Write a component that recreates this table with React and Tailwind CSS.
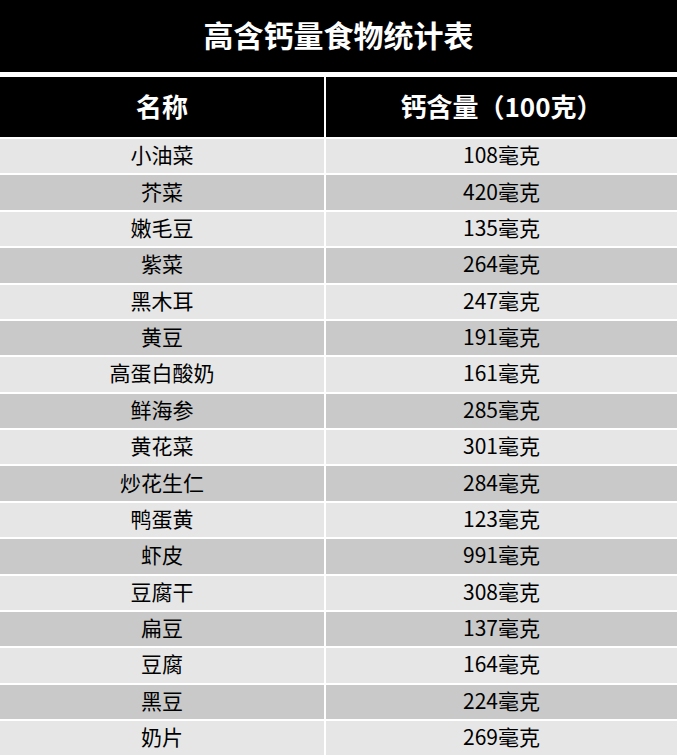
import React from "react";

const rows = [
  ["小油菜", "108毫克"],
  ["芥菜", "420毫克"],
  ["嫩毛豆", "135毫克"],
  ["紫菜", "264毫克"],
  ["黑木耳", "247毫克"],
  ["黄豆", "191毫克"],
  ["高蛋白酸奶", "161毫克"],
  ["鲜海参", "285毫克"],
  ["黄花菜", "301毫克"],
  ["炒花生仁", "284毫克"],
  ["鸭蛋黄", "123毫克"],
  ["虾皮", "991毫克"],
  ["豆腐干", "308毫克"],
  ["扁豆", "137毫克"],
  ["豆腐", "164毫克"],
  ["黑豆", "224毫克"],
  ["奶片", "269毫克"],
];

export default function App() {
  return (
    <div
      className="w-[677px] h-[755px] overflow-hidden bg-white"
      style={{ fontFamily: '"Microsoft YaHei", "Noto Sans CJK SC", "Noto Sans", sans-serif' }}
    >
      <div className="h-[72px] pb-[4px] bg-black flex items-center justify-center text-white text-[30px] font-bold leading-none">
        高含钙量食物统计表
      </div>
      <div className="mt-[5px] grid grid-cols-[324px_1fr] gap-x-[2px] gap-y-[2px]">
        <div className="h-[60px] pb-[2px] bg-black flex items-center justify-center text-white text-[26px] font-bold leading-none">
          名称
        </div>
        <div className="h-[60px] pb-[2px] bg-black flex items-center justify-center text-white text-[26px] font-bold leading-none">
          钙含量（100克）
        </div>
        {rows.map(([name, val], i) => (
          <React.Fragment key={i}>
            <div
              className={`h-[34.375px] pb-[3px] flex items-center justify-center text-black text-[21px] leading-none ${
                i % 2 === 0 ? "bg-[#e6e6e6]" : "bg-[#c9c9c9]"
              }`}
            >
              {name}
            </div>
            <div
              className={`h-[34.375px] pb-[3px] flex items-center justify-center text-black text-[21px] leading-none ${
                i % 2 === 0 ? "bg-[#e6e6e6]" : "bg-[#c9c9c9]"
              }`}
            >
              {val}
            </div>
          </React.Fragment>
        ))}
      </div>
    </div>
  );
}
